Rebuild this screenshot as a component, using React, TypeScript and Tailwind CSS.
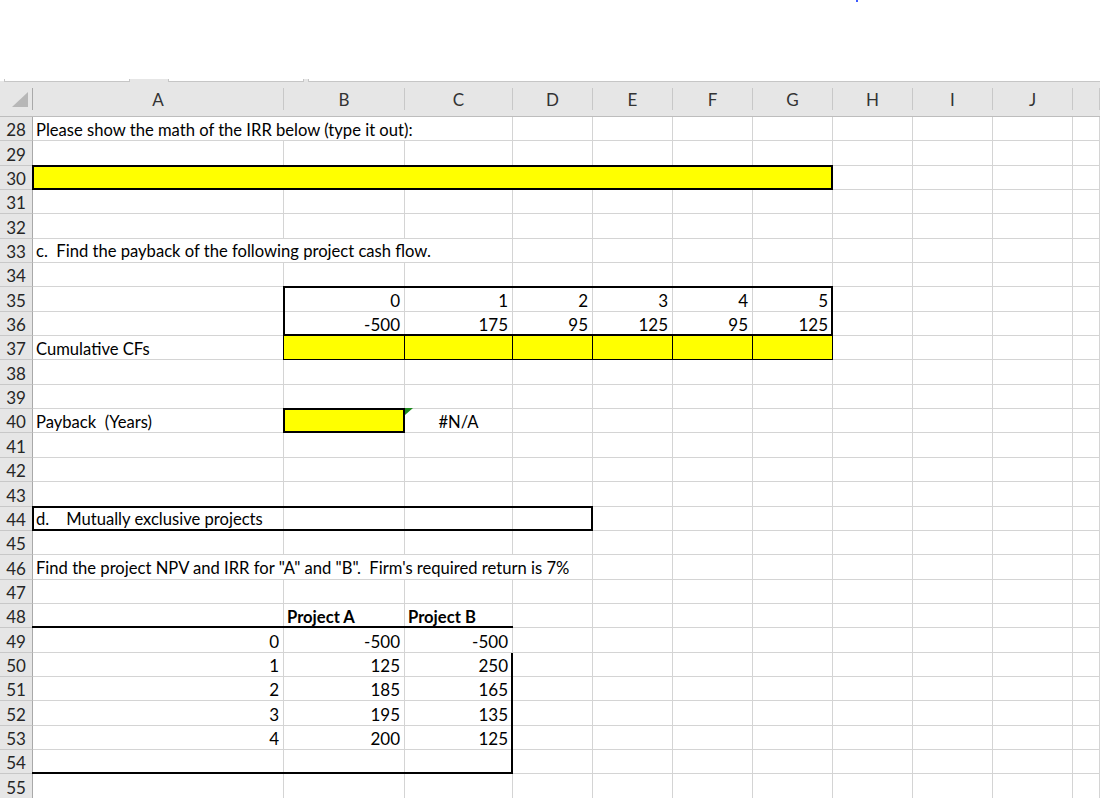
import { Fragment } from "react";
import clsx from "clsx";

type Cell = {
  col: number; // 0 = column A
  text: string;
  span?: number;
  align?: "left" | "right" | "center";
  bold?: boolean;
};

// same track sizes for the header, the cells and the border layer
const COLS_TEMPLATE =
  "grid-cols-[33px_251px_121px_108px_80px_80px_80px_80px_80px_80px_80px_minmax(0,1fr)]";

const LETTERS = ["A", "B", "C", "D", "E", "F", "G", "H", "I", "J", ""];

const SPAN: Record<number, string> = {
  1: "",
  3: "col-span-3",
  4: "col-span-4",
};

const nums = (vals: string[], from = 1): Cell[] =>
  vals.map((text, i) => ({ col: from + i, text, align: "right" }));

const SHEET: Record<number, Cell[]> = {
  28: [{ col: 0, span: 3, text: "Please show the math of the IRR below (type it out):" }],
  33: [{ col: 0, span: 3, text: "c.  Find the payback of the following project cash flow." }],
  35: nums(["0", "1", "2", "3", "4", "5"]),
  36: nums(["-500", "175", "95", "125", "95", "125"]),
  37: [{ col: 0, text: "Cumulative CFs" }],
  40: [
    { col: 0, text: "Payback  (Years)" },
    { col: 2, text: "#N/A", align: "center" },
  ],
  44: [{ col: 0, text: "d.    Mutually exclusive projects" }],
  46: [
    {
      col: 0,
      span: 4,
      text: 'Find the project NPV and IRR for "A" and "B".  Firm\'s required return is 7%',
    },
  ],
  48: [
    { col: 1, text: "Project A", bold: true },
    { col: 2, text: "Project B", bold: true },
  ],
  49: nums(["0", "-500", "-500"], 0),
  50: nums(["1", "125", "250"], 0),
  51: nums(["2", "185", "165"], 0),
  52: nums(["3", "195", "135"], 0),
  53: nums(["4", "200", "125"], 0),
};

const ROWS = Array.from({ length: 28 }, (_, i) => 28 + i);

const YELLOW_ROW = [
  "col-start-3",
  "col-start-4",
  "col-start-5",
  "col-start-6",
  "col-start-7",
  "col-start-8",
];

function SheetRow({ row }: { row: number }) {
  const cells = SHEET[row] ?? [];
  const out = [
    <div
      key="num"
      className="flex items-end justify-center pb-[2px] leading-none text-[17px] bg-[#e6e6e6] border-r border-r-[#a9a9a9] border-b border-b-[#c8c8c8] text-[#262626]"
    >
      {row}
    </div>,
  ];
  for (let c = 0; c < 11; ) {
    const cell = cells.find((x) => x.col === c);
    const span = cell?.span ?? 1;
    out.push(
      <div
        key={c}
        className={clsx(
          "flex items-end whitespace-pre pb-[2px] leading-none border-r border-b border-[#d4d4d4]",
          SPAN[span],
          cell?.align === "right" && "justify-end pr-[4px] text-[17px]",
          cell?.align === "center" && "justify-center",
          (!cell?.align || cell.align === "left") && "pl-[3px]",
          cell?.bold && "font-bold"
        )}
      >
        {cell?.text}
      </div>
    );
    c += span;
  }
  return <Fragment>{out}</Fragment>;
}

export default function App() {
  return (
    <div className="w-[1100px] h-[798px] overflow-hidden bg-white text-[16.6px] text-black font-['Lato',sans-serif]">
      {/* strip above the sheet */}
      <div className="h-[79px]">
        <div className="ml-[856px] w-[2px] h-[2px] bg-[#3d5afe]" />
      </div>
      <div className="flex h-[3px] bg-[#e6e6e6]">
        <div className="w-[4px] h-[2px] bg-white" />
        <div className="w-[126px] h-[3px] bg-white border-x border-b border-[#c6c6c6]" />
        <div className="w-[38px]" />
        <div className="w-[136px] h-[3px] bg-white border-x border-b border-[#c6c6c6]" />
        <div className="w-[4px]" />
        <div className="flex-1 h-[3px] bg-white border-l border-b border-[#c6c6c6]" />
      </div>

      {/* column letters */}
      <div className={clsx("grid h-[35px] bg-[#e6e6e6] border-b border-[#bdbdbd]", COLS_TEMPLATE)}>
        <div className="flex flex-col justify-end">
          <div className="flex h-[22px] items-end justify-end pr-[4px] pb-[3px] border-r border-[#a9a9a9]">
            <svg width="16" height="15" viewBox="0 0 16 15">
              <polygon points="16,0 16,15 0,15" fill="#b7b7b7" />
            </svg>
          </div>
        </div>
        {LETTERS.map((l, i) => (
          <div key={i} className="flex flex-col justify-end">
            <div className="flex h-[22px] items-center justify-center leading-none text-[17px] text-[#333] border-r border-[#c8c8c8]">
              {l}
            </div>
          </div>
        ))}
        <div />
      </div>

      {/* cells with a border layer stacked on top */}
      <div className="grid">
        <div className={clsx("col-start-1 row-start-1 grid auto-rows-[24.35px]", COLS_TEMPLATE)}>
          {ROWS.map((r) => (
            <SheetRow key={r} row={r} />
          ))}
        </div>

        <div
          className={clsx(
            "col-start-1 row-start-1 grid auto-rows-[24.35px] pointer-events-none",
            COLS_TEMPLATE
          )}
        >
          <div className="col-start-2 col-span-7 row-start-3 -mt-px -ml-px border-2 border-black bg-[#ffff00]" />
          <div className="col-start-3 col-span-6 row-start-8 row-span-2 -mt-px -ml-px border-2 border-black" />
          {YELLOW_ROW.map((c) => (
            <div key={c} className={clsx(c, "row-start-10 -mt-px -ml-px border border-black bg-[#ffff00]")} />
          ))}
          <div className="col-start-3 row-start-13 -mt-px -ml-px border-2 border-black bg-[#ffff00]" />
          <svg
            className="col-start-4 row-start-13 self-start justify-self-start -mt-px"
            width="8"
            height="7"
            viewBox="0 0 8 7"
          >
            <polygon points="0,0 8,0 0,7" fill="#1e8a1e" />
          </svg>
          <div className="col-start-2 col-span-4 row-start-17 -mt-px -ml-px border-2 border-black" />
          <div className="col-start-2 col-span-3 row-start-21 -ml-px border-b-2 border-black" />
          <div className="col-start-2 col-span-3 row-start-23 row-span-5 -ml-px border-r-2 border-b-2 border-black" />
        </div>
      </div>
    </div>
  );
}
